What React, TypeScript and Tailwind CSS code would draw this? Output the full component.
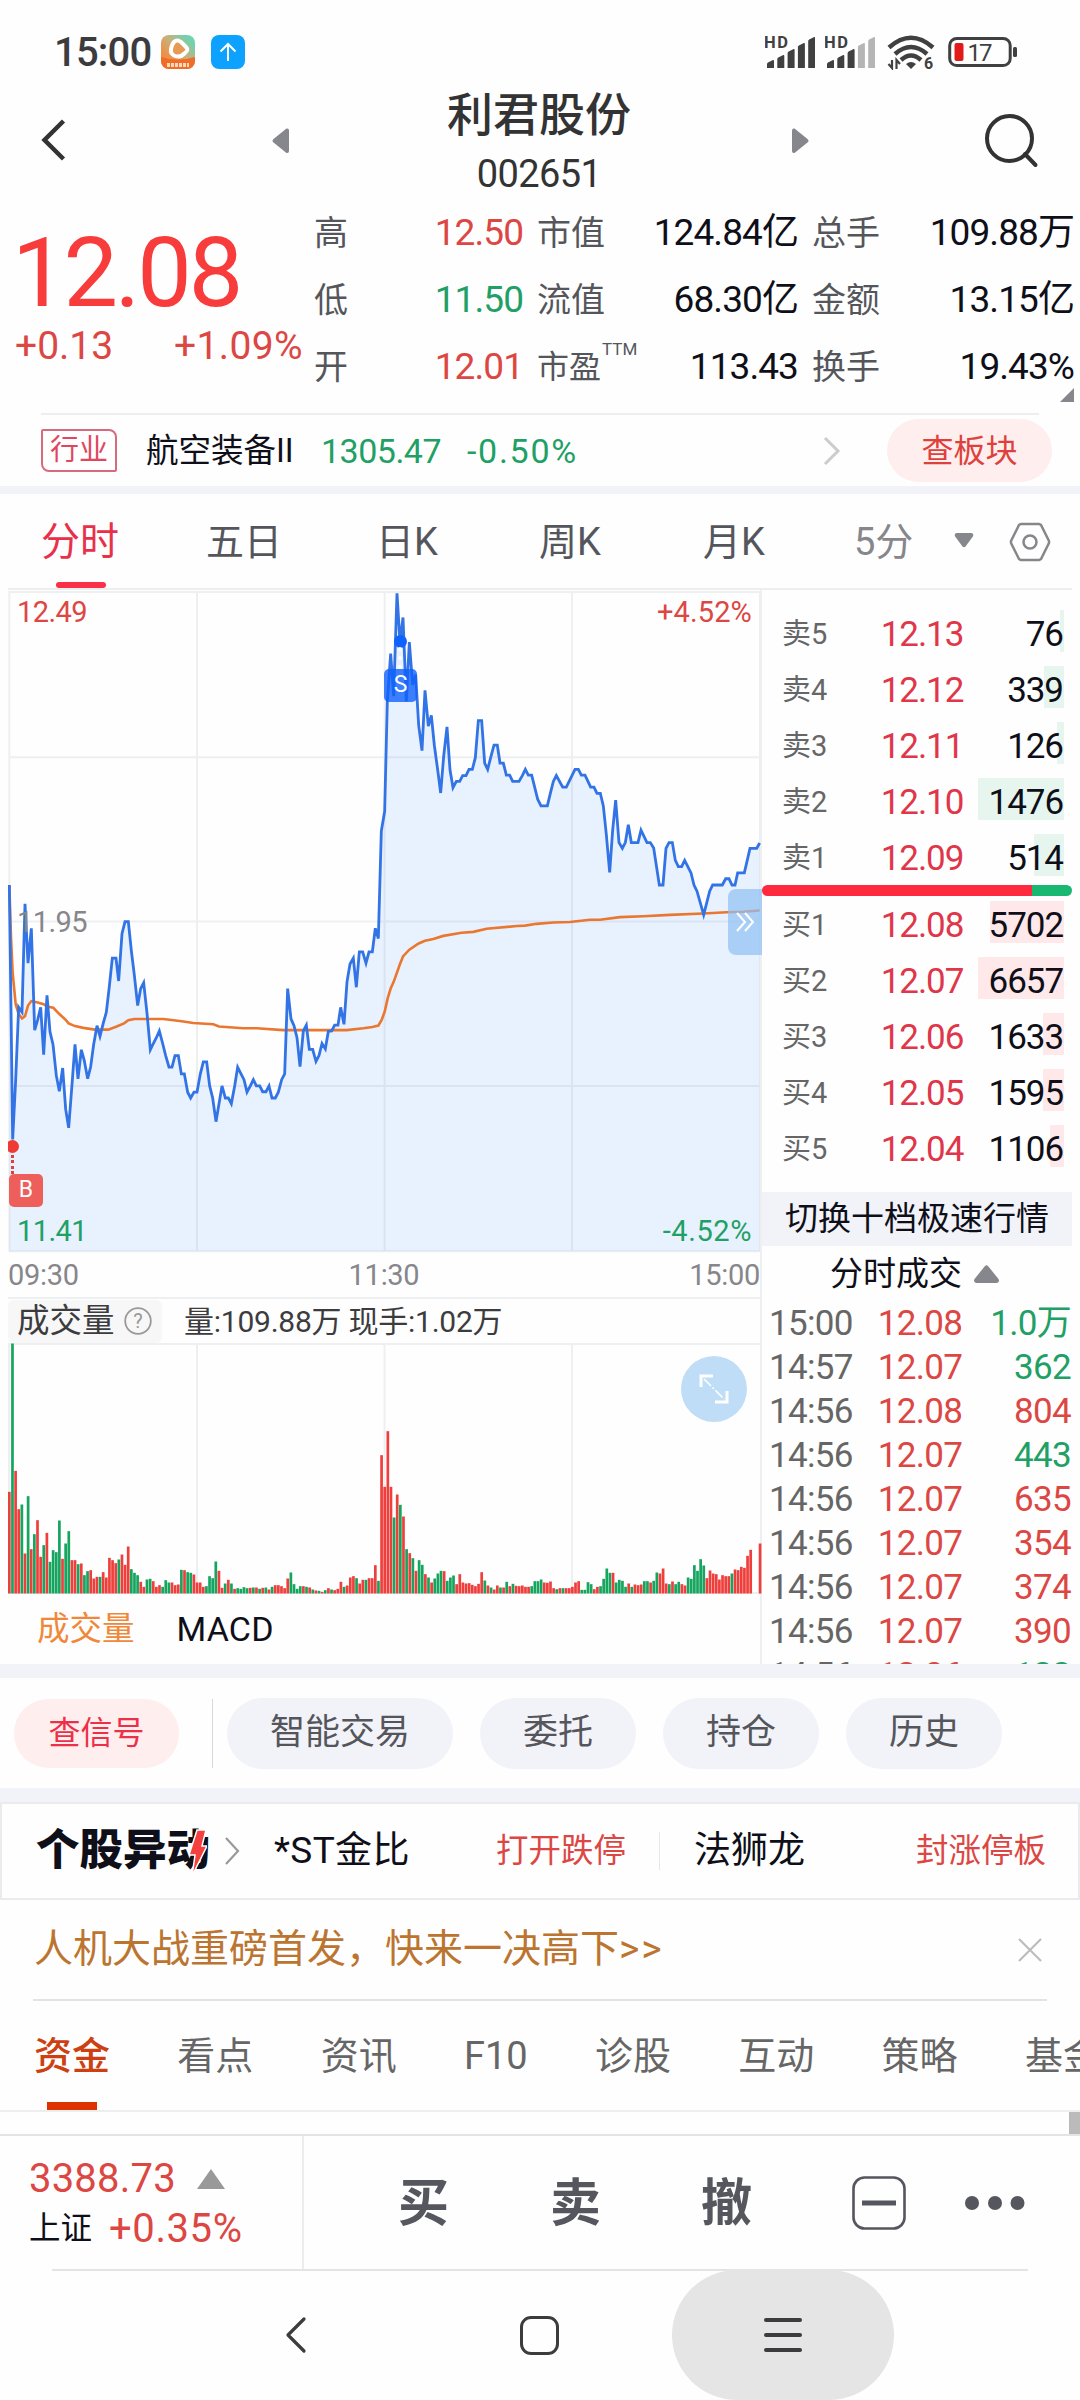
/**
 * Stock detail screen
 * Quote header, intraday chart, order book and trading shortcuts
 */

import type { ReactNode } from 'react';
import clsx from 'clsx';

type Tone = 'up' | 'down' | 'plain';

const toneClass: Record<Tone, string> = {
  up: 'text-[#dc4744]',
  down: 'text-[#1fa065]',
  plain: 'text-[#0e0f18]',
};

interface Metric {
  label: string;
  value: string;
  tone: Tone;
  sup?: string;
}

const metricColumns: { className: string; items: Metric[] }[] = [
  {
    className: 'ml-[314px] w-[209px]',
    items: [
      { label: '高', value: '12.50', tone: 'up' },
      { label: '低', value: '11.50', tone: 'down' },
      { label: '开', value: '12.01', tone: 'up' },
    ],
  },
  {
    className: 'ml-[14px] w-[261px]',
    items: [
      { label: '市值', value: '124.84亿', tone: 'plain' },
      { label: '流值', value: '68.30亿', tone: 'plain' },
      { label: '市盈', value: '113.43', tone: 'plain', sup: 'TTM' },
    ],
  },
  {
    className: 'ml-[14px] w-[262px]',
    items: [
      { label: '总手', value: '109.88万', tone: 'plain' },
      { label: '金额', value: '13.15亿', tone: 'plain' },
      { label: '换手', value: '19.43%', tone: 'plain' },
    ],
  },
];

interface BookLevel {
  label: string;
  price: string;
  qty: string;
  depth: number;
}

const asks: BookLevel[] = [
  { label: '卖5', price: '12.13', qty: '76', depth: 4 },
  { label: '卖4', price: '12.12', qty: '339', depth: 20 },
  { label: '卖3', price: '12.11', qty: '126', depth: 7 },
  { label: '卖2', price: '12.10', qty: '1476', depth: 86 },
  { label: '卖1', price: '12.09', qty: '514', depth: 30 },
];

const bids: BookLevel[] = [
  { label: '买1', price: '12.08', qty: '5702', depth: 74 },
  { label: '买2', price: '12.07', qty: '6657', depth: 86 },
  { label: '买3', price: '12.06', qty: '1633', depth: 21 },
  { label: '买4', price: '12.05', qty: '1595', depth: 21 },
  { label: '买5', price: '12.04', qty: '1106', depth: 14 },
];

const ticks: { time: string; price: string; qty: string; tone: Tone }[] = [
  { time: '15:00', price: '12.08', qty: '1.0万', tone: 'down' },
  { time: '14:57', price: '12.07', qty: '362', tone: 'down' },
  { time: '14:56', price: '12.08', qty: '804', tone: 'up' },
  { time: '14:56', price: '12.07', qty: '443', tone: 'down' },
  { time: '14:56', price: '12.07', qty: '635', tone: 'up' },
  { time: '14:56', price: '12.07', qty: '354', tone: 'up' },
  { time: '14:56', price: '12.07', qty: '374', tone: 'up' },
  { time: '14:56', price: '12.07', qty: '390', tone: 'up' },
  { time: '14:56', price: '12.06', qty: '123', tone: 'down' },
];

// Plot space is 2262 x 1487 units, stretched onto the 754 x 664 chart box
const pricePoints =
  '28,683 33,960 38,1253 47,1120 56,957 66,968 75,725 84,858 94,780 104,1008 113,985 122,957 131,1063 141,930 150,1012 159,1040 169,1110 178,1145 188,1093 197,1185 206,1227 216,1130 225,1040 234,1117 244,1052 253,1077 263,1117 272,1090 281,1040 291,998 300,1022 310,992 319,968 328,910 337,847 348,847 356,898 366,792 375,765 385,765 394,830 403,885 413,953 422,915 431,902 441,970 451,1052 460,1038 469,1025 478,1010 488,1038 497,1065 507,1091 516,1091 525,1065 535,1065 544,1106 553,1106 563,1147 572,1160 582,1147 591,1147 601,1106 610,1079 620,1079 629,1133 638,1160 648,1213 657,1173 666,1133 676,1160 685,1160 694,1173 704,1133 713,1091 723,1106 732,1119 741,1147 751,1133 760,1119 769,1133 779,1133 788,1146 798,1146 807,1133 816,1160 826,1160 835,1147 845,1119 854,1106 863,915 873,983 882,998 891,1025 900,1090 910,1010 919,997 928,1051 938,1051 948,1078 957,1065 966,1038 976,1050 985,1011 995,1010 1004,997 1014,997 1022,957 1032,995 1041,900 1050,860 1060,847 1069,912 1078,833 1088,833 1098,858 1107,833 1117,833 1126,780 1135,803 1144,562 1154,518 1162,270 1172,165 1181,260 1191,30 1200,140 1209,84 1219,272 1228,139 1238,235 1247,212 1256,325 1266,382 1275,247 1285,327 1294,303 1303,370 1313,425 1322,477 1331,395 1341,329 1350,425 1359,465 1369,451 1379,451 1388,438 1398,438 1407,424 1417,424 1426,398 1435,315 1445,315 1454,410 1463,424 1472,398 1482,370 1492,370 1500,410 1510,410 1519,437 1529,437 1538,451 1557,451 1567,438 1576,424 1585,437 1595,437 1604,464 1613,491 1623,506 1642,506 1651,478 1660,451 1669,438 1688,464 1699,464 1725,424 1735,424 1744,437 1755,437 1772,464 1782,464 1791,478 1801,478 1810,506 1819,570 1829,655 1838,560 1847,493 1857,588 1867,601 1876,588 1885,548 1894,588 1914,588 1923,560 1941,588 1951,588 1961,600 1978,683 1989,683 1998,601 2007,588 2017,588 2026,628 2035,642 2045,642 2054,628 2073,656 2082,683 2091,697 2111,750 2129,697 2138,683 2167,683 2177,669 2187,669 2196,683 2205,683 2213,656 2233,656 2250,601 2270,601 2279,589';

const averagePoints =
  '28,683 33,800 38,880 47,950 56,972 66,982 75,977 84,953 94,943 113,946 131,950 141,955 160,958 178,972 197,985 206,993 225,999 250,1003 285,1007 325,1007 350,1000 372,993 385,986 403,983 490,983 545,988 580,992 640,995 657,1000 730,1004 770,1004 850,1008 1040,1008 1090,1004 1117,1001 1135,998 1145,985 1154,967 1163,937 1172,915 1181,900 1200,860 1209,843 1228,828 1256,814 1275,808 1300,804 1330,797 1385,790 1420,788 1460,781 1550,775 1575,774 1610,770 1660,767 1710,766 1770,761 1800,761 1860,755 1930,753 2010,750 2110,747 2180,744 2230,743 2279,740';

// One entry per minute: direction letter and bar height
const volumeSeries =
  'r305 g750 r368 r253 g267 r120 g292 r133 g178 r220 r110 g145 r182 g95 g130 g124 g219 r104 g150 g187 r100 r100 g88 r90 g55 g67 r70 r45 r50 g50 r64 r48 r107 r100 r91 g102 r117 r86 r141 g73 g62 g55 r35 r20 g42 g44 r37 r20 r25 g20 g40 g33 r33 r25 r27 g71 r70 g64 g62 r57 r33 r33 r20 g22 g52 g46 g96 r68 r17 g30 r41 g30 r14 g16 g14 g19 g16 r17 g18 r18 g14 r17 g18 r12 g20 r25 r25 r22 r16 r45 g63 g28 g14 g22 r22 g20 r18 g12 r9 g8 r5 g10 r16 g12 r10 r14 r35 g20 r24 r48 r52 g46 r30 r41 g41 r46 r46 r85 g38 r415 r320 r487 r320 g228 r297 g266 r231 g133 r121 g106 r68 g100 g86 r58 g48 r33 g45 g60 g68 r67 g38 g48 g54 r28 r58 r33 r30 r31 r26 r22 r29 r64 g39 r24 g18 r12 r24 g18 r18 g35 r22 g29 r23 r22 r24 r20 r20 g22 g37 g37 g42 r33 r32 r36 r16 g13 r16 g16 r16 r16 r20 r33 r37 g11 g11 g34 g28 r13 r20 g22 g44 g75 g62 r62 g33 g41 g38 g20 r30 g20 r27 r25 r27 g37 g37 r33 g38 g63 r60 r75 r30 g28 r36 g28 g35 r28 r24 g48 g44 g85 g68 g103 g84 r46 r69 r60 r58 r42 r55 r52 r52 g60 r72 r70 r80 r77 r113 r131 r0 r0 r150';

const volumeBars = volumeSeries.split(' ').map((entry) => ({
  rising: entry[0] === 'r',
  height: Number(entry.slice(1)) / 3,
}));

const SignalBars = ({ weak = false }: { weak?: boolean }) => (
  <svg width="50" height="36" viewBox="0 0 50 36">
    <text x="-1" y="14" fontSize="16.5" fontWeight="700" fill="#404040" textLength="24">HD</text>
    {[26, 21, 15, 9, 3].map((top, i) => (
      <path
        key={top}
        d={`M${2 + i * 10.3} ${top + 4}q0-1 1-1.600l5-2.400q1-.3 1 1V34h-7z`}
        fill={weak && i > 2 ? '#b5b5b5' : '#404040'}
      />
    ))}
  </svg>
);

const StatusBar = () => (
  <header className="flex h-[88px] items-center pt-4 text-[#3c3c3e]">
    <span className="ml-[54px] w-[107px] pt-[2px] text-[40px] font-medium leading-none tracking-[-0.02em]">15:00</span>
    <svg width="34" height="34" viewBox="0 0 34 34">
      <defs>
        <linearGradient id="player" x1="0" y1="1" x2="1" y2="0">
          <stop offset="0.2" stopColor="#f48a3c" />
          <stop offset="0.55" stopColor="#c9b07a" />
          <stop offset="0.85" stopColor="#6fd3b0" />
        </linearGradient>
      </defs>
      <rect width="34" height="34" rx="8" fill="url(#player)" />
      <path d="M0 22q17 5 34 0v4a8 8 0 0 1-8 8H8a8 8 0 0 1-8-8z" fill="#f06c28" />
      <path d="M13 7q3-3 7 0l5 5q3 3-1 6-5 5-10 3-5-2-4-7 1-5 3-7z" fill="#e79a55" stroke="#fff" strokeWidth="4" strokeLinejoin="round" />
      <path d="M6 30h22" stroke="#ffd9b8" strokeWidth="4" strokeDasharray="3 1" />
    </svg>
    <svg className="ml-4" width="34" height="34" viewBox="0 0 34 34" fill="none">
      <rect width="34" height="34" rx="8" fill="#0da2ff" />
      <path d="M17 26V9M9.500 16.500 17 9l7.500 7.500" stroke="#fff" strokeWidth="2" />
    </svg>
    <div className="ml-auto mr-[61px] flex items-center">
      <SignalBars />
      <div className="w-[10px]" />
      <SignalBars weak />
      <svg className="ml-[12px]" width="49" height="36" viewBox="0 0 49 36" fill="none" stroke="#404040">
        <path d="M2 13.500Q24-6 46 13.500" strokeWidth="4.500" />
        <path d="M8 20q16-14 32 0" strokeWidth="4.500" />
        <path d="M14 26q10-9 20 0" strokeWidth="4.500" />
        <path d="m19 30 5 5 5-5q-5-4-10 0z" fill="#404040" stroke="none" />
        <path d="M5 26v8l-3.500-4M9.500 35v-9l3.500 4" strokeWidth="2.200" />
        <text x="37" y="35" fontSize="16" fontWeight="700" fill="#404040" stroke="none">6</text>
      </svg>
      <svg className="ml-[12px]" width="71" height="32" viewBox="0 0 71 32">
        <rect x="1.700" y="2.500" width="60.500" height="27" rx="7" fill="none" stroke="#404040" strokeWidth="3" />
        <rect x="6.500" y="7" width="9" height="18" rx="2" fill="#e11b1b" />
        <rect x="65" y="11" width="4" height="10" rx="1.500" fill="#404040" />
        <text x="19.500" y="24.500" fontSize="24" fill="#404040" textLength="25">17</text>
      </svg>
    </div>
  </header>
);

const TitleBar = () => (
  <div className="flex h-[115px] text-[#333]">
    <svg className="ml-[40px] mt-[30px]" width="28" height="44" viewBox="0 0 28 44" fill="none">
      <path d="M23.500 3 4.500 22l19 19" stroke="#333" strokeWidth="4.500" />
    </svg>
    <svg className="ml-[203px] mt-[39px]" width="19" height="28" viewBox="0 0 19 28">
      <path d="M15.500 1.500 2.500 12q-2 1.800 0 3.500l13 10.500q2.500.5 2.500-2v-20.500q0-2.500-2.500-2z" fill="#86868d" />
    </svg>
    <div className="ml-[57px] flex w-[384px] flex-col items-center">
      <h1 className="h-[58px] text-[46px] font-medium leading-[54px]">利君股份</h1>
      <span className="text-[38px] leading-[56px] tracking-[-0.015em]">002651</span>
    </div>
    <svg className="ml-[60px] mt-[39px]" width="19" height="28" viewBox="0 0 19 28">
      <path d="m3.500 1.500 13 10.500q2 1.800 0 3.500l-13 10.500q-2.500.5-2.500-2v-20.500q0-2.500 2.500-2z" fill="#86868d" />
    </svg>
    <svg className="ml-[174px] mt-[24px]" width="56" height="56" viewBox="0 0 56 56" fill="none" stroke="#333" strokeWidth="4">
      <circle cx="25.500" cy="26.500" r="22.500" />
      <path d="m41 42 10.500 11" strokeLinecap="round" />
    </svg>
  </div>
);

const QuotePanel = () => (
  <section className="relative flex h-[210px]">
    <div className="absolute left-0 top-0 flex w-[310px] flex-col">
      <span className="mt-[23px] pl-[12px] text-[97px] leading-[94px] tracking-[-0.032em] text-[#f83b3b]">12.08</span>
      <div className="mt-[4px] flex justify-between pl-[15px] pr-[7px] text-[39px] leading-[44px] text-[#dc4744]">
        <span>+0.13</span>
        <span className="tracking-[0.01em]">+1.09%</span>
      </div>
    </div>
    {metricColumns.map((column) => (
      <div key={column.className} className={clsx('-mt-[4px] flex flex-col', column.className)}>
        {column.items.map((item) => (
          <div key={item.label} className="flex h-[67px] items-center justify-between leading-[60px]">
            <span className={clsx('flex items-start text-[#55565c]', item.sup ? 'text-[32px]' : 'text-[34px]')}>
              {item.label}
              {item.sup && <span className="ml-[1px] text-[17px] leading-[24px]">{item.sup}</span>}
            </span>
            <span className={clsx('text-[37px] tracking-[-0.025em]', toneClass[item.tone])}>{item.value}</span>
          </div>
        ))}
      </div>
    ))}
    <svg className="absolute right-[6px] top-[185px]" width="14" height="14" viewBox="0 0 14 14">
      <path d="M14 0v14H0z" fill="#86868d" />
    </svg>
  </section>
);

const IndustryRow = () => (
  <section className="mx-[41px] flex h-[73px] items-center border-t-2 border-[#eee]">
    <span className="flex h-[43px] w-[76px] items-center justify-center rounded-bl-[8px] rounded-br-[2px] rounded-tl-[2px] rounded-tr-[8px] border-2 border-[#d66a7e] text-[29px] text-[#e0475f]">
      行业
    </span>
    <span className="ml-[29px] w-[175px] whitespace-nowrap pt-[2px] text-[32.5px] text-[#0e0f18]">航空装备II</span>
    <span className="w-[146px] pt-[2px] text-[34px] tracking-[-0.015em] text-[#1fa065]">1305.47</span>
    <span className="pt-[2px] text-[34px] tracking-[0.05em] text-[#1fa065]">-0.50%</span>
    <svg className="ml-auto" width="18" height="30" viewBox="0 0 18 30" fill="none">
      <path d="m2 2 13 13L2 28" stroke="#ccc" strokeWidth="3" />
    </svg>
    <button className="-mr-[13px] ml-[46px] h-[63px] w-[165px] rounded-full bg-[#feeeee] text-[32px] text-[#e0403b]">查板块</button>
  </section>
);

const PeriodTabs = () => (
  <nav className="mx-2 flex h-[96px] border-b-2 border-[#eee] text-[38px] leading-[96px] text-[#55565c]">
    <div className="ml-[33px] flex w-[165px] flex-col text-[39px] text-[#e8304a]">
      <span className="h-[88px]">分时</span>
      <span className="ml-[15px] h-[8px] w-[50px] rounded-full bg-[#fa2f49]" />
    </div>
    <span className="w-[170px]">五日</span>
    <span className="w-[163px]">日K</span>
    <span className="w-[164px]">周K</span>
    <span className="w-[151px]">月K</span>
    <span className="w-[90px] text-[#86868b]">5分</span>
    <svg className="ml-[10px] mt-[38px]" width="20" height="17" viewBox="0 0 20 17">
      <path d="M2.500 1h15q3 1 1 4l-7 9.500q-1.500 1.500-3 0L1.500 5q-2-3 1-4z" fill="#86868d" />
    </svg>
    <svg className="ml-[35px] mt-[28px]" width="42" height="40" viewBox="0 0 42 40" fill="none" stroke="#86868b" strokeWidth="2.500">
      <path d="M12 2h18l2 1 8 16v2l-8 16-2 1H12l-2-1-8-16v-2l8-16z" />
      <circle cx="21" cy="20" r="6.500" />
    </svg>
  </nav>
);

const PriceChart = () => (
  <div className="relative h-[664px] w-[754px] overflow-hidden">
    <svg width="754" height="664" viewBox="24 22.4 2262 1487" preserveAspectRatio="none" fill="none">
      <path
        d="M28 27H2280V1503H28zM591 27V1503M1154 27V1503M1716 27V1503M28 397H2280M28 765H2280M28 1133H2280"
        stroke="#eeeff1"
        strokeWidth="2"
        vectorEffect="non-scaling-stroke"
      />
      <polygon points={`28,1503 ${pricePoints} 2279,1503`} fill="#2b7bff" fillOpacity="0.1" />
      <polyline points={averagePoints} stroke="#e9772f" strokeWidth="2.6" vectorEffect="non-scaling-stroke" />
      <polyline points={pricePoints} stroke="#3273e6" strokeWidth="2.8" vectorEffect="non-scaling-stroke" />
    </svg>

    <div className="absolute inset-0 text-[29px] leading-[30px] tracking-[-0.02em]">
      <span className="absolute left-[9px] top-[7px] text-[#dc4744]">12.49</span>
      <span className="absolute right-[10px] top-[7px] tracking-[0.005em] text-[#dc4744]">+4.52%</span>
      <span className="absolute left-[9px] top-[317px] text-[#86868b]">11.95</span>
      <span className="absolute bottom-[8px] left-[9px] text-[#1fa065]">11.41</span>
      <span className="absolute bottom-[8px] right-[10px] tracking-[0.02em] text-[#1fa065]">-4.52%</span>
    </div>

    {/* Trade markers */}
    <span className="absolute -left-[2px] top-[550px] size-[13px] rounded-full bg-[#f03a34]" />
    <span className="absolute left-[3px] top-[565px] h-[19px] border-l-3 border-dotted border-[#e0403b]" />
    <span className="absolute left-[1px] top-[584px] flex h-[33px] w-[34px] items-center justify-center rounded-[5px] bg-[#ee5f5b] text-[23px] text-white">B</span>
    <span className="absolute left-[386px] top-[45px] size-[13px] rounded-full bg-[#0f62fe]" />
    <span className="absolute left-[390px] top-[57px] h-[22px] border-l-4 border-dotted border-white" />
    <span className="absolute left-[376px] top-[79px] flex h-[33px] w-[33px] items-center justify-center rounded-[5px] bg-[#0f62fe]/80 text-[23px] text-white">S</span>
    <span className="absolute right-0 top-[299px] flex h-[66px] w-[34px] items-center justify-center rounded-l-[8px] bg-[#8fc1f3]/70">
      <svg width="20" height="20" viewBox="0 0 20 20" fill="none" stroke="#fff" strokeWidth="2">
        <path d="m2 1 8 9-8 9M10 1l8 9-8 9" />
      </svg>
    </span>
  </div>
);

const VolumeChart = () => (
  <div className="relative h-[251px] w-[754px]">
    <svg width="754" height="251" viewBox="0 0 754 251">
      <path d="M0 1H754M1 1V250M189 1V250M376.500 1V250M564 1V250M753 1V250M0 250H754" stroke="#eeeff1" strokeWidth="2" />
      {volumeBars.map((bar, i) => (
        <rect
          key={i}
          x={i * 3.128}
          y={250.5 - bar.height}
          width="2.700"
          height={bar.height}
          fill={bar.rising ? '#ee3f3c' : '#15a55f'}
        />
      ))}
    </svg>
    <span className="absolute right-[15px] top-[13px] flex size-[66px] items-center justify-center rounded-full bg-[#bfddf6]">
      <svg width="30" height="30" viewBox="0 0 30 30" fill="none" stroke="#fff" strokeWidth="3">
        <path d="M2 13V2h12M28 17v11H16" />
        <path d="m5 5 20 20" strokeWidth="1.500" strokeDasharray="10 2 2 2" />
      </svg>
    </span>
  </div>
);

const ChartColumn = () => (
  <div className="flex w-[754px] flex-col border-r-2 border-[#eeeff1]">
    <PriceChart />
    <div className="flex h-[43px] items-center justify-between text-[29px] tracking-[-0.01em] text-[#86868b]">
      <span className="w-[100px]">09:30</span>
      <span>11:30</span>
      <span className="w-[100px] text-right">15:00</span>
    </div>
    <div className="flex h-[46px] items-center border-t-2 border-[#eeeff1] text-[#3c3c3e]">
      <div className="flex h-[43px] w-[154px] items-center rounded-[6px] bg-[#f7f7f8] pl-[9px] text-[32.5px]">
        成交量
        <svg className="ml-[9px]" width="28" height="28" viewBox="0 0 28 28">
          <circle cx="14" cy="14" r="12.800" fill="none" stroke="#999" strokeWidth="1.800" />
          <text x="14" y="21" textAnchor="middle" fontSize="20" fill="#999">?</text>
        </svg>
      </div>
      <span className="ml-[22px] whitespace-nowrap text-[30px] tracking-[-0.008em]">量:109.88万 现手:1.02万</span>
    </div>
    <VolumeChart />
    <div className="flex h-[70px] items-center text-[32.5px]">
      <span className="ml-[29px] text-[#f0883a]">成交量</span>
      <span className="ml-[42px] text-[34px] tracking-[0.005em] text-[#0e0f18]">MACD</span>
    </div>
  </div>
);

const BookRow = ({ level, side }: { level: BookLevel; side: 'ask' | 'bid' }) => (
  <div className="relative flex h-[56px] shrink-0 items-center pl-[20px] pr-[9px] text-[35px] tracking-[-0.03em]">
    <div
      className={clsx('absolute right-[8px] top-[3px] h-[42px]', side === 'ask' ? 'bg-[#e6f5ee]' : 'bg-[#ffe8ea]')}
      style={{ width: level.depth }}
    />
    <span className="w-[80px] text-[29px] tracking-normal text-[#666]">{level.label}</span>
    <span className="w-[120px] text-center text-[#e0364a]">{level.price}</span>
    <span className="relative ml-auto text-[#0e0f18]">{level.qty}</span>
  </div>
);

const OrderBook = () => (
  <aside className="flex w-[310px] flex-col overflow-hidden">
    <div className="h-[17px] shrink-0" />
    {asks.map((level) => (
      <BookRow key={level.label} level={level} side="ask" />
    ))}
    <div className="-mt-[2px] mb-[2px] flex h-[11px] shrink-0 overflow-hidden rounded-full">
      <div className="w-[270px] bg-[#ff2940]" />
      <div className="flex-1 bg-[#18b872]" />
    </div>
    {bids.map((level) => (
      <BookRow key={level.label} level={level} side="bid" />
    ))}
    <button className="mt-[14px] h-[54px] shrink-0 bg-[#f2f3f8] text-[33px] text-[#0e0f18]">切换十档极速行情</button>
    <div className="flex h-[56px] shrink-0 items-center pl-[68px] text-[33px] text-[#0e0f18]">
      分时成交
      <svg className="ml-[12px]" width="25" height="18" viewBox="0 0 25 18">
        <path d="M11 1q1.500-1.500 3 0l10.500 13q1.500 3-1.500 4H2q-3-1-1.500-4z" fill="#86868d" />
      </svg>
    </div>
    {ticks.map((tick, i) => (
      <div key={i} className="flex h-[44px] shrink-0 items-center pl-[7px] pr-[1px] text-[35px] tracking-[-0.02em]">
        <span className="w-[95px] text-[#666]">{tick.time}</span>
        <span className="w-[112px] text-center text-[#dc4744]">{tick.price}</span>
        <span className={clsx('ml-auto', toneClass[tick.tone])}>{tick.qty}</span>
      </div>
    ))}
  </aside>
);

const Chip = ({ children }: { children: ReactNode }) => (
  <button className="mr-[27px] h-[71px] rounded-full bg-[#f2f3f8] px-[43px] text-[35px] text-[#55565c]">{children}</button>
);

const ShortcutBar = () => (
  <section className="flex h-[124px] items-center border-b-14 border-[#f2f3f8] pl-[14px]">
    <button className="h-[69px] w-[165px] rounded-full bg-[#feeeee] text-[32px] text-[#ee2f48]">查信号</button>
    <span className="ml-[33px] mr-[14px] h-[69px] w-px bg-[#d8d8dc]" />
    <Chip>智能交易</Chip>
    <Chip>委托</Chip>
    <Chip>持仓</Chip>
    <Chip>历史</Chip>
  </section>
);

const MoversRow = () => (
  <section className="flex h-[98px] items-center whitespace-nowrap border-2 border-[#ebebee] pl-[34px] text-[#0e0f18]">
    <span className="relative text-[43.5px] font-black leading-none">
      个股异动
      <svg className="absolute -top-[1px] right-[3px]" width="18" height="52" viewBox="0 0 18 52">
        <path d="M8 2h9l-4 16h5L3 48l3-21H0z" fill="#f4413f" stroke="#fff" strokeWidth="1.500" />
      </svg>
    </span>
    <svg className="ml-[14px]" width="16" height="28" viewBox="0 0 16 28" fill="none">
      <path d="m2 1 12 13L2 27" stroke="#999" strokeWidth="2.200" />
    </svg>
    <span className="ml-[34px] w-[222px] text-[37px] tracking-[0.01em]">*ST金比</span>
    <span className="w-[163px] text-[32.5px] text-[#dc4744]">打开跌停</span>
    <span className="h-[38px] w-px bg-[#e6e6e8]" />
    <span className="ml-[34px] w-[222px] text-[37px]">法狮龙</span>
    <span className="text-[32.5px] text-[#dc4744]">封涨停板</span>
  </section>
);

const PromoRow = () => (
  <section className="mx-[33px] flex h-[101px] items-center justify-between border-b-2 border-[#e4e4e6]">
    <p className="ml-px whitespace-nowrap text-[39px] leading-none text-[#bb7530]">
      人机大战重磅首发，快来一决高下<span className="tracking-[0.05em]">&gt;&gt;</span>
    </p>
    <svg className="mr-[5px]" width="24" height="24" viewBox="0 0 24 24">
      <path d="m1 1 22 22M23 1 1 23" stroke="#bbb" strokeWidth="2" />
    </svg>
  </section>
);

const infoTabs = ['看点', '资讯', 'F10', '诊股', '互动', '策略', '基金'];

const InfoTabs = () => (
  <nav className="flex h-[111px] gap-[67.3px] overflow-hidden whitespace-nowrap border-b-2 border-[#eee] pl-[34px] text-[38px] leading-[110px] text-[#666]">
    <div className="flex flex-col items-center text-[#cc4012]">
      <span className="h-[101px] font-medium">资金</span>
      <span className="h-[8px] w-[50px] bg-[#dc3300]" />
    </div>
    {infoTabs.map((tab) => (
      <span key={tab} className="shrink-0">{tab}</span>
    ))}
  </nav>
);

const TradeBar = () => (
  <footer className="flex h-[136px] border-t-2 border-[#e4e4e6] text-[#55565e]">
    <div className="flex w-[304px] flex-col border-r-2 border-[#ececee] pl-[29px] pt-[18px] text-[#dc4744]">
      <div className="flex h-[50px] items-center text-[40px] tracking-[0.005em]">
        3388.73
        <svg className="ml-[21px]" width="28" height="20" viewBox="0 0 28 20">
          <path d="M14 0 28 20H0z" fill="#999" />
        </svg>
      </div>
      <div className="flex h-[50px] items-center text-[40px] tracking-[0.015em]">
        <span className="mr-[17px] text-[31.5px] tracking-normal text-[#0e0f18]">上证</span>
        +0.35%
      </div>
    </div>
    <div className="flex flex-1 items-center text-[51px] font-bold leading-none">
      <span className="ml-[94px] w-[152px]">买</span>
      <span className="w-[151px]">卖</span>
      <span className="w-[151px]">撤</span>
      <svg width="54" height="54" viewBox="0 0 54 54" fill="none" stroke="#55565e">
        <rect x="1.500" y="1.500" width="51" height="51" rx="11" strokeWidth="2.600" />
        <path d="M10 27h34" strokeWidth="5" />
      </svg>
      <svg className="ml-[59px]" width="60" height="14" viewBox="0 0 60 14" fill="#55565e">
        <circle cx="7" cy="7" r="7" />
        <circle cx="30" cy="7" r="7" />
        <circle cx="52.500" cy="7" r="7" />
      </svg>
    </div>
  </footer>
);

const SystemNav = () => (
  <div className="flex h-[130px] flex-col">
    <div className="mx-[52px] -mt-px h-[2px] shrink-0 bg-[#e4e4e6]" />
    <div className="-mt-px flex h-[130px] shrink-0 items-center">
      <svg className="ml-[284px]" width="24" height="38" viewBox="0 0 24 38" fill="none">
        <path d="M20 3 4 19l16 16" stroke="#3c3c3e" strokeWidth="3.200" strokeLinecap="round" strokeLinejoin="round" />
      </svg>
      <span className="ml-[212px] h-[39px] w-[39px] rounded-[11px] border-[3.5px] border-[#3c3c3e]" />
      <div className="ml-[113px] flex h-[130px] w-[222px] flex-col items-center justify-center gap-[11px] rounded-[65px] bg-[#e5e5e5]">
        <span className="h-[4px] w-[38px] rounded-full bg-[#3c3c3e]" />
        <span className="h-[4px] w-[38px] rounded-full bg-[#3c3c3e]" />
        <span className="h-[4px] w-[38px] rounded-full bg-[#3c3c3e]" />
      </div>
    </div>
  </div>
);

export default function App() {
  return (
    <div className="flex h-[2400px] w-[1080px] flex-col overflow-hidden bg-[#fefefe] font-['Roboto','Noto_Sans_CJK_SC',sans-serif] *:shrink-0">
      <StatusBar />
      <TitleBar />
      <QuotePanel />
      <IndustryRow />
      <div className="h-[8px] bg-[#f2f3f8]" />
      <PeriodTabs />
      <main className="flex h-[1074px] pl-[8px]">
        <ChartColumn />
        <OrderBook />
      </main>
      <div className="h-[14px] bg-[#f2f3f8]" />
      <ShortcutBar />
      <MoversRow />
      <PromoRow />
      <InfoTabs />
      <div className="flex h-[22px] justify-end">
        <span className="w-[11px] bg-[#bbb]" />
      </div>
      <TradeBar />
      <SystemNav />
    </div>
  );
}
